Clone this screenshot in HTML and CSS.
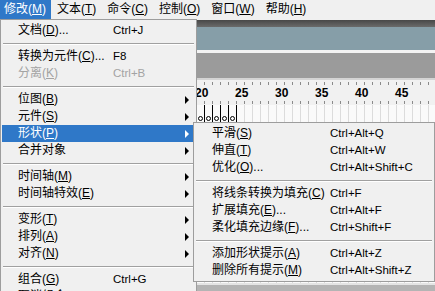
FILE: index.html
```html
<!DOCTYPE html>
<html>
<head>
<meta charset="utf-8">
<link rel="stylesheet" href="styles.css">
</head>
<body>
<div class="app">
  <div class="menubar">
    <div class="mb-item active">修改(<u>M</u>)</div>
    <div class="mb-item">文本(<u>T</u>)</div>
    <div class="mb-item">命令(<u>C</u>)</div>
    <div class="mb-item">控制(<u>O</u>)</div>
    <div class="mb-item">窗口(<u>W</u>)</div>
    <div class="mb-item">帮助(<u>H</u>)</div>
  </div>
  <div class="workspace">
    <div class="band-dark"></div>
    <div class="band-blue"></div>
    <div class="band-light"></div>
    <div class="band-gray"></div>
    <div class="ruler-line"></div>
    <div class="ruler">
      <span class="num">20</span><span class="num">25</span><span class="num">30</span><span class="num">35</span><span class="num">40</span><span class="num">45</span>
    </div>
    <div class="frames">
      <div class="keyrow">
        <span class="key-cell"></span><span class="key-cell"></span><span class="key-cell"></span><span class="key-cell"></span><span class="key-cell"></span>
      </div>
    </div>
    <div class="bottom"></div>
  </div>

  <div class="menu main">
    <div class="item"><span class="label">文档(<u>D</u>)...</span><span class="key">Ctrl+J</span></div>
    <div class="sep"></div>
    <div class="item"><span class="label">转换为元件(<u>C</u>)...</span><span class="key">F8</span></div>
    <div class="item disabled"><span class="label">分离(<u>K</u>)</span><span class="key">Ctrl+B</span></div>
    <div class="sep"></div>
    <div class="item"><span class="label">位图(<u>B</u>)</span><span class="key"></span><span class="arrow"></span></div>
    <div class="item"><span class="label">元件(<u>S</u>)</span><span class="key"></span><span class="arrow"></span></div>
    <div class="item active"><span class="label">形状(<u>P</u>)</span><span class="key"></span><span class="arrow"></span></div>
    <div class="item"><span class="label">合并对象</span><span class="key"></span><span class="arrow"></span></div>
    <div class="sep"></div>
    <div class="item"><span class="label">时间轴(<u>M</u>)</span><span class="key"></span><span class="arrow"></span></div>
    <div class="item"><span class="label">时间轴特效(<u>E</u>)</span><span class="key"></span><span class="arrow"></span></div>
    <div class="sep"></div>
    <div class="item"><span class="label">变形(<u>T</u>)</span><span class="key"></span><span class="arrow"></span></div>
    <div class="item"><span class="label">排列(<u>A</u>)</span><span class="key"></span><span class="arrow"></span></div>
    <div class="item"><span class="label">对齐(<u>N</u>)</span><span class="key"></span><span class="arrow"></span></div>
    <div class="sep"></div>
    <div class="item"><span class="label">组合(<u>G</u>)</span><span class="key">Ctrl+G</span></div>
    <div class="item"><span class="label">取消组合(<u>U</u>)</span><span class="key">Ctrl+Shift+G</span></div>
  </div>

  <div class="menu sub">
    <div class="item"><span class="label">平滑(<u>S</u>)</span><span class="key">Ctrl+Alt+Q</span></div>
    <div class="item"><span class="label">伸直(<u>T</u>)</span><span class="key">Ctrl+Alt+W</span></div>
    <div class="item"><span class="label">优化(<u>O</u>)...</span><span class="key">Ctrl+Alt+Shift+C</span></div>
    <div class="sep"></div>
    <div class="item"><span class="label">将线条转换为填充(<u>C</u>)</span><span class="key">Ctrl+F</span></div>
    <div class="item"><span class="label">扩展填充(<u>E</u>)...</span><span class="key">Ctrl+Alt+F</span></div>
    <div class="item"><span class="label">柔化填充边缘(<u>F</u>)...</span><span class="key">Ctrl+Shift+F</span></div>
    <div class="sep"></div>
    <div class="item"><span class="label">添加形状提示(<u>A</u>)</span><span class="key">Ctrl+Alt+Z</span></div>
    <div class="item"><span class="label">删除所有提示(<u>M</u>)</span><span class="key">Ctrl+Alt+Shift+Z</span></div>
  </div>
</div>
</body>
</html>
```
FILE: styles.css
```css
html, body {
  margin: 0;
  padding: 0;
  overflow: hidden;
}
body {
  font-family: "Liberation Sans", "Noto Sans CJK SC", sans-serif;
  font-size: 12px;
  color: #000;
  background: #f0f0f0;
}
u {
  text-decoration: underline;
  text-underline-offset: 1px;
}
.app {
  position: relative;
  width: 435px;
  height: 291px;
  overflow: hidden;
}
.menubar {
  display: flex;
  height: 20px;
  background: #f0f0f0;
}
.mb-item {
  height: 19px;
  line-height: 19px;
  padding: 0 5px 0 6px;
  white-space: nowrap;
}
.mb-item.active {
  padding: 0 5px 0 4px;
  background: #2f78c8;
  color: #fff;
}
.band-dark {
  height: 7px;
  background: linear-gradient(#484848, #6a6a6a);
}
.band-blue {
  height: 23px;
  background: #869ea8;
}
.band-light {
  height: 3px;
  background: #f3f3f3;
}
.band-gray {
  height: 25px;
  background: #9b9b9b;
}
.ruler-line {
  height: 2px;
  background: #d4d4d4;
}
.ruler {
  display: flex;
  height: 25px;
  padding-left: 195px;
  box-sizing: border-box;
  background-color: #f1f1f1;
  background-image:
    repeating-linear-gradient(to right, transparent 0 4px, #8a8a8a 4px 5px, transparent 5px 8px),
    repeating-linear-gradient(to right, transparent 0 4px, #8a8a8a 4px 5px, transparent 5px 8px);
  background-size: 100% 3px, 100% 3px;
  background-position: 0 2px, 0 21px;
  background-repeat: no-repeat;
}
.num {
  flex: none;
  width: 40px;
  font-weight: bold;
  font-size: 12px;
  line-height: 12px;
  margin-top: 7px;
}
.frames {
  height: 178px;
  padding-left: 197px;
  box-sizing: border-box;
  background-color: #fafafa;
  background-image: repeating-linear-gradient(to right, transparent 0 4px, #dcdcdc 4px 5px, transparent 5px 8px);
}
.keyrow {
  display: flex;
  height: 17px;
}
.key-cell {
  width: 7px;
  border-right: 1px solid #000;
  position: relative;
}
.key-cell::after {
  content: "";
  position: absolute;
  left: 1px;
  bottom: 1px;
  width: 3px;
  height: 3px;
  border: 1px solid #000;
  border-radius: 50%;
}
.bottom {
  height: 8px;
  border-top: 2px solid #e4e4e4;
  background: #b4b4b4;
}
.menu {
  position: absolute;
  background: #f0f0f0;
  border: 1px solid #9d9d9d;
  padding: 2px 1px;
  box-sizing: border-box;
}
.menu.main {
  left: 0;
  top: 19px;
  width: 197px;
}
.menu.sub {
  left: 193px;
  top: 122px;
  width: 242px;
}
.item {
  display: grid;
  align-items: center;
  height: 17px;
  line-height: 17px;
  white-space: nowrap;
}
.main .item {
  grid-template-columns: 95px 72px 4px;
  padding-left: 16px;
}
.sub .item {
  grid-template-columns: 118px 1fr;
  padding-left: 17px;
}
.item.active {
  background: #2f78c8;
  color: #fff;
}
.item.disabled {
  color: #a3a3a3;
}
.key {
  font-size: 11.5px;
}
.arrow {
  width: 0;
  height: 0;
  border-left: 4px solid #000;
  border-top: 4px solid transparent;
  border-bottom: 4px solid transparent;
}
.item.active .arrow {
  border-left-color: #fff;
}
.sep {
  height: 1px;
  margin: 4px 1px 3px;
  border-top: 1px solid #a0a0a0;
  background: #fff;
}
```
